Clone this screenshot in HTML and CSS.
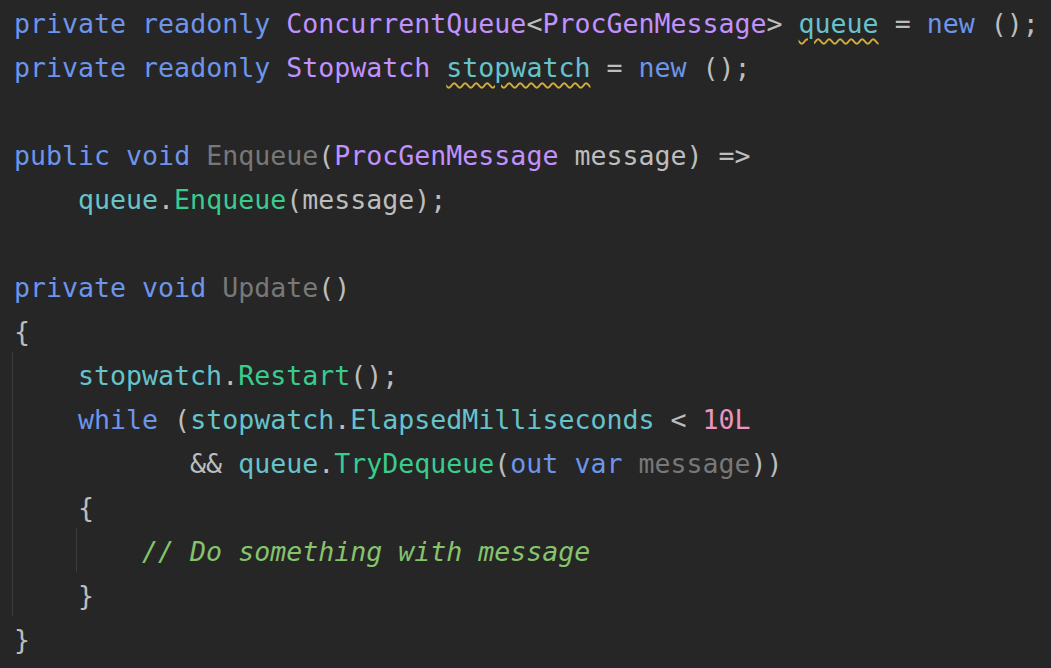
FILE: index.html
```html
<!DOCTYPE html>
<html>
<head>
<meta charset="utf-8">
<link rel="stylesheet" href="styles.css">
</head>
<body>
<div class="editor">
  <div class="line"><span class="kw">private</span> <span class="kw">readonly</span> <span class="ty">ConcurrentQueue</span>&lt;<span class="ty">ProcGenMessage</span>&gt; <span class="fld warn">queue</span> = <span class="kw">new</span> ();</div>
  <div class="line"><span class="kw">private</span> <span class="kw">readonly</span> <span class="ty">Stopwatch</span> <span class="fld warn">stopwatch</span> = <span class="kw">new</span> ();</div>
  <div class="line"></div>
  <div class="line"><span class="kw">public</span> <span class="kw">void</span> <span class="dim">Enqueue</span>(<span class="ty">ProcGenMessage</span> message) =&gt;</div>
  <div class="line ind"><span class="fld">queue</span>.<span class="mth">Enqueue</span>(message);</div>
  <div class="line"></div>
  <div class="line"><span class="kw">private</span> <span class="kw">void</span> <span class="dim">Update</span>()</div>
  <div class="line">{</div>
  <div class="block">
    <div class="line"><span class="fld">stopwatch</span>.<span class="mth">Restart</span>();</div>
    <div class="line"><span class="kw">while</span> (<span class="fld">stopwatch</span>.<span class="fld">ElapsedMilliseconds</span> &lt; <span class="num">10L</span></div>
    <div class="line">       &amp;&amp; <span class="fld">queue</span>.<span class="mth">TryDequeue</span>(<span class="kw">out</span> <span class="kw">var</span> <span class="dim">message</span>))</div>
    <div class="line">{</div>
    <div class="block">
      <div class="line"><span class="cmt">// Do something with message</span></div>
    </div>
    <div class="line">}</div>
  </div>
  <div class="line">}</div>
</div>
</body>
</html>
```

FILE: styles.css
```css
html, body {
  margin: 0;
  padding: 0;
  background: #262626;
}
.editor {
  padding: 0 0 0 14px;
  font-family: "DejaVu Sans Mono", "Liberation Mono", monospace;
  font-size: 26.6px;
  color: #bdbdbd;
}
.line {
  height: 44px;
  line-height: 48px;
  white-space: pre;
}
.ind {
  padding-left: 4ch;
}
.block {
  margin-left: -2px;
  border-left: 1px solid #3b3b3b;
  padding-left: calc(4ch + 1px);
}
.kw { color: #6c95eb; }
.ty { color: #c191ff; }
.fld { color: #66c3cc; }
.mth { color: #39cc8f; }
.num { color: #ed94c0; }
.dim { color: #787878; }
.cmt { color: #85c46c; font-style: italic; }
.warn {
  text-decoration: underline wavy #d0ad3c;
  text-decoration-thickness: 1.5px;
  text-underline-offset: 5px;
}
```
